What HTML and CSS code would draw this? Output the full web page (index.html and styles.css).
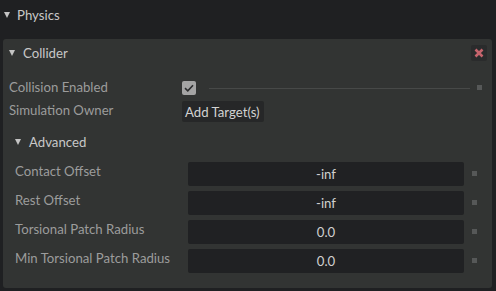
FILE: index.html
```html
<!DOCTYPE html>
<html>
<head>
<meta charset="utf-8">
<link rel="stylesheet" href="styles.css">
</head>
<body>
<div class="frame">
  <div class="section-header">
    <span class="tri"></span><span class="section-title">Physics</span>
  </div>
  <div class="panel">
    <div class="panel-header">
      <span class="tri"></span><span class="panel-title">Collider</span>
      <span class="close-btn">
        <svg width="10" height="10" viewBox="0 0 10 10"><path d="M1.5 1.5 L8.5 8.5 M8.5 1.5 L1.5 8.5" stroke="#c6646d" stroke-width="2.6" stroke-linecap="butt"/></svg>
      </span>
    </div>
    <div class="panel-body">
      <div class="row row-check">
        <span class="label">Collision Enabled</span>
        <span class="value">
          <span class="checkbox">
            <svg width="10" height="8" viewBox="0 0 10 8"><path d="M1 4.2 L3.8 6.8 L9 1.2" fill="none" stroke="#2b2c2d" stroke-width="1.6"/></svg>
          </span>
          <span class="rule"></span>
          <span class="dot"></span>
        </span>
      </div>
      <div class="row row-owner">
        <span class="label">Simulation Owner</span>
        <span class="value"><span class="btn">Add Target(s)</span></span>
      </div>
      <div class="sub-header">
        <span class="tri"></span><span class="sub-title">Advanced</span>
      </div>
      <div class="fields">
        <div class="field">
          <span class="label">Contact Offset</span>
          <span class="input">-inf</span>
          <span class="dot"></span>
        </div>
        <div class="field">
          <span class="label">Rest Offset</span>
          <span class="input">-inf</span>
          <span class="dot"></span>
        </div>
        <div class="field">
          <span class="label">Torsional Patch Radius</span>
          <span class="input">0.0</span>
          <span class="dot"></span>
        </div>
        <div class="field">
          <span class="label">Min Torsional Patch Radius</span>
          <span class="input">0.0</span>
          <span class="dot"></span>
        </div>
      </div>
    </div>
  </div>
</div>
</body>
</html>
```

FILE: styles.css
```css
* { box-sizing: border-box; }
html, body {
  margin: 0;
  padding: 0;
  background: #1f2022;
  width: 496px;
  height: 291px;
  overflow: hidden;
}
body {
  font-family: Lato, "Open Sans", sans-serif;
  font-size: 13.2px;
  color: #9c9c9c;
}
.frame {
  display: flex;
  flex-direction: column;
}
.tri {
  display: inline-block;
  width: 0;
  height: 0;
  border-left: 3.5px solid transparent;
  border-right: 3.5px solid transparent;
  border-top: 6px solid #c4c4c4;
}
.section-header {
  height: 30px;
  display: flex;
  align-items: center;
  padding-left: 4px;
}
.section-title {
  margin-left: 7px;
  color: #c8c8c8;
}
.panel {
  margin: 9px 4px 0 3px;
  background: #323433;
  border-radius: 3px;
  height: 249px;
}
.panel-header {
  height: 28px;
  display: flex;
  align-items: center;
  padding-left: 6px;
  padding-right: 5px;
}
.panel-title {
  margin-left: 8px;
  color: #c8c8c8;
  flex: 1;
}
.close-btn {
  width: 16px;
  height: 16px;
  background: #2a2b2c;
  border-radius: 2px;
  display: flex;
  align-items: center;
  justify-content: center;
}
.panel-body {
  padding: 10px 0 0 6px;
}
.row {
  display: flex;
  align-items: center;
}
.row .label {
  width: 173px;
}
.row-check { height: 22px; }
.row-check .label { margin-top: -2px; }
.value {
  display: flex;
  align-items: center;
  flex: 1;
}
.checkbox {
  width: 14px;
  height: 14px;
  background: #a4a4a4;
  border-radius: 2px;
  display: flex;
  align-items: center;
  justify-content: center;
}
.rule {
  flex: 1;
  height: 1px;
  background: #474948;
  margin-left: 13px;
  margin-right: 7px;
}
.dot {
  width: 5px;
  height: 5px;
  background: #565858;
  flex: none;
}
.row-check .dot { margin-right: 10px; margin-top: -2px; }
.row-owner {
  height: 21px;
  margin-top: 2px;
}
.row-owner .label { margin-top: -4px; }
.btn {
  height: 21px;
  padding: 0 4px 0 3px;
  background: #262728;
  border-radius: 2px;
  color: #d2d2d2;
  display: flex;
  align-items: center;
}
.sub-header {
  height: 24px;
  margin-top: 8px;
  display: flex;
  align-items: center;
  padding-left: 6px;
}
.sub-title {
  margin-left: 8px;
  color: #c8c8c8;
}
.fields {
  margin-top: 8px;
  display: flex;
  flex-direction: column;
  gap: 5px;
  padding-left: 6px;
}
.field {
  display: flex;
  align-items: center;
  height: 24px;
}
.field .label {
  width: 173px;
  margin-top: -7px;
}
.input {
  width: 276px;
  height: 24px;
  background: #202123;
  border-radius: 2px;
  color: #d0d0d0;
  display: flex;
  align-items: center;
  justify-content: center;
}
.field .dot { margin-left: 8px; margin-top: -1px; }
```
